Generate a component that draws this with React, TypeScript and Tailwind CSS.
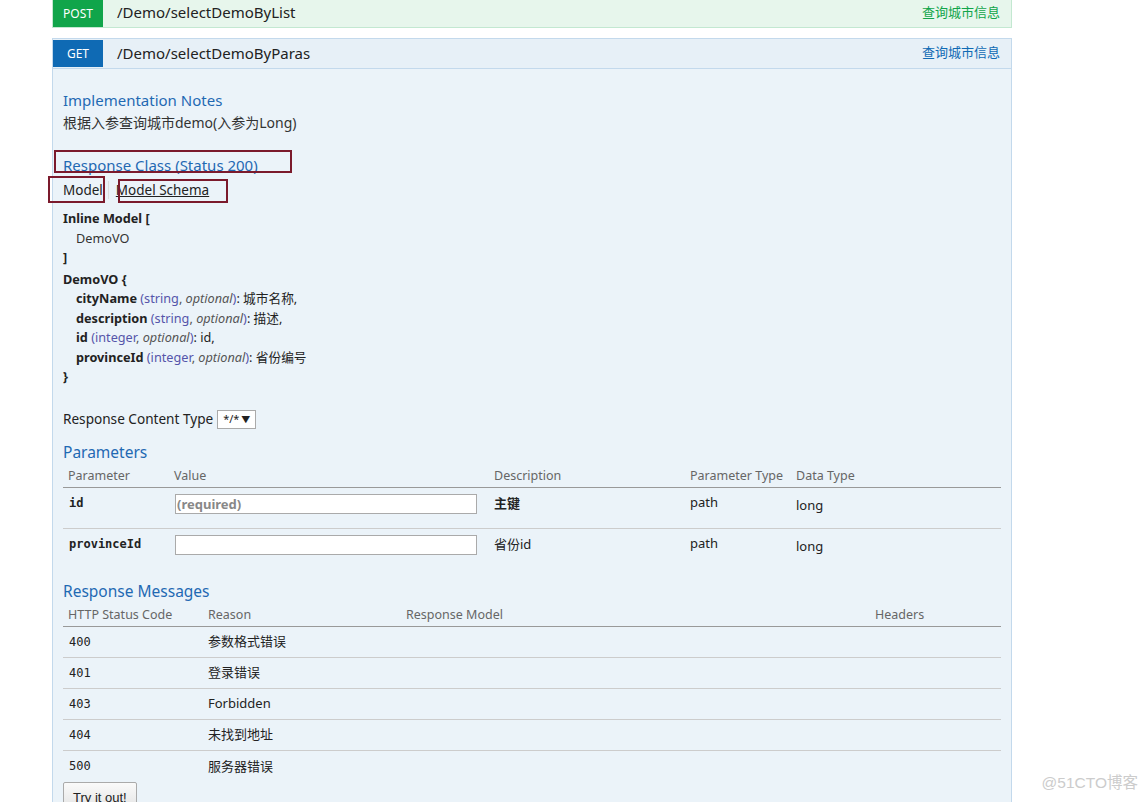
import React from 'react';

const sans = { fontFamily: '"Noto Sans", "Noto Sans CJK SC", sans-serif' };
const mono = { fontFamily: '"DejaVu Sans Mono", monospace', fontSize: 12 };

interface Param {
  name: string;
  placeholder?: string;
  desc: string;
  bold?: boolean;
}

const params: Param[] = [
  { name: 'id', placeholder: '(required)', desc: '主键', bold: true },
  { name: 'provinceId', desc: '省份id' },
];

const messages = [
  ['400', '参数格式错误'],
  ['401', '登录错误'],
  ['403', 'Forbidden'],
  ['404', '未找到地址'],
  ['500', '服务器错误'],
];

function Field({ name, type, last, desc }: { name: string; type: string; last?: boolean; desc: string }) {
  return (
    <div className="pl-[13px]">
      <span className="font-bold">{name}</span>{' '}
      <span className="text-[#55a]">(</span>
      <span className="text-[#55a]">{type}</span>
      <span className="text-[#555]">, <i>optional</i></span>
      <span className="text-[#55a]">)</span>: {desc}
      {last ? '' : ','}
    </div>
  );
}

export default function App() {
  return (
    <div className="relative w-[1148px] h-[802px] overflow-hidden bg-white text-[#222]" style={sans}>
      <div className="ml-[52px] w-[960px]">
        {/* POST row */}
        <div className="flex h-[28px] items-stretch border border-t-0 border-[#c3e8d1] bg-[#e7f6ec]">
          <div className="flex w-[50px] items-center justify-center bg-[#10a54a] text-[12px] text-white">POST</div>
          <div className="ml-[14px] flex items-center text-[15px] text-[#222] -mt-[2px]">/Demo/selectDemoByList</div>
          <div className="ml-auto mr-[11px] flex items-center text-[13px] text-[#10a54a] -mt-[2px]">查询城市信息</div>
        </div>

        {/* GET row */}
        <div className="mt-[10px] flex h-[31px] items-stretch border border-[#c3d9ec] bg-[#e7f0f7] py-px">
          <div className="flex w-[50px] items-center justify-center bg-[#0f6ab4] text-[12px] text-white">GET</div>
          <div className="ml-[14px] flex items-center text-[15px] text-[#222]">/Demo/selectDemoByParas</div>
          <div className="ml-auto mr-[11px] flex items-center text-[13px] text-[#0f6ab4] -mt-[2px]">查询城市信息</div>
        </div>

        {/* Body */}
        <div className="relative h-[800px] border-x border-[#c3d9ec] bg-[#ebf3f9] pl-[10px] pr-[10px] pt-[20px] text-[13px]">
          <div className="text-[15px] leading-[22px] text-[#1f69b3]">Implementation Notes</div>
          <div className="mt-[2px] text-[14px] leading-[19px] text-[#333]">根据入参查询城市demo(入参为Long)</div>

          <div className="mt-[22px] text-[15px] leading-[22px] text-[#1f69b3]">Response Class (Status 200)</div>
          <div className="mt-[3px] flex h-[22px] items-center text-[13.5px]">
            <span className="pr-[5px]">Model</span>
            <span className="h-[18px] w-px bg-[#ddd]" />
            <span className="ml-[7px] underline">Model Schema</span>
          </div>

          <div className="mt-[8px] text-[12.7px] leading-[19.5px] text-[#222]">
            <div className="font-bold">Inline Model [</div>
            <div className="pl-[13px] text-[#333]">DemoVO</div>
            <div className="font-bold">]</div>
            <div className="mt-[2px] font-bold">DemoVO {'{'}</div>
            <Field name="cityName" type="string" desc="城市名称" />
            <Field name="description" type="string" desc="描述" />
            <Field name="id" type="integer" desc="id" />
            <Field name="provinceId" type="integer" desc="省份编号" last />
            <div className="font-bold">{'}'}</div>
          </div>

          <div className="mt-[23px] flex h-[20px] items-center text-[13.6px]">
            <span>Response Content Type</span>
            <span className="ml-[4px] flex h-[19px] w-[39px] items-center justify-between border border-[#aaa] bg-white px-[5px] text-[11px]">
              <span>*/*</span>
              <span className="text-[9px]">▼</span>
            </span>
          </div>

          <div className="mt-[11px] text-[15.5px] leading-[22px] text-[#1f69b3]">Parameters</div>
          <table className="w-[938px] border-collapse text-[12.5px]">
            <thead>
              <tr className="h-[25px] border-b border-[#999] text-left text-[#666]">
                <th className="w-[106px] pl-[5px] pt-[3px] font-normal">Parameter</th>
                <th className="w-[320px] pl-[5px] pt-[3px] font-normal">Value</th>
                <th className="w-[196px] pl-[5px] pt-[3px] font-normal">Description</th>
                <th className="w-[106px] pl-[5px] pt-[3px] font-normal">Parameter Type</th>
                <th className="pl-[5px] pt-[3px] font-normal">Data Type</th>
              </tr>
            </thead>
            <tbody className="text-[13px]">
              {params.map((p, i) => (
                <tr key={p.name} className={`h-[41px] align-top ${i === 0 ? 'border-b border-[#ccc]' : ''}`}>
                  <td className="pl-[6px] pt-[6px] font-bold" style={mono}>
                    {p.name}
                  </td>
                  <td className="pl-[6px] pt-[6px]">
                    <input
                      className="h-[20px] w-[302px] border border-[#aaa] bg-white px-px text-[13px] font-bold placeholder:text-[#888] outline-none"
                      placeholder={p.placeholder ?? ''}
                      readOnly
                    />
                  </td>
                  <td className={`pl-[5px] pt-[6px] ${p.bold ? 'font-bold' : ''}`}>{p.desc}</td>
                  <td className="pl-[5px] pt-[5px]">path</td>
                  <td className="pl-[5px] pt-[8px]">long</td>
                </tr>
              ))}
            </tbody>
          </table>

          <div className="mt-[10px] text-[15.5px] leading-[22px] text-[#1f69b3]">Response Messages</div>
          <table className="w-[938px] border-collapse text-[12.5px]">
            <thead>
              <tr className="h-[25px] border-b border-[#999] text-left text-[#666]">
                <th className="w-[140px] pl-[5px] pt-[3px] font-normal">HTTP Status Code</th>
                <th className="w-[198px] pl-[5px] pt-[3px] font-normal">Reason</th>
                <th className="w-[469px] pl-[5px] pt-[3px] font-normal">Response Model</th>
                <th className="pl-[5px] pt-[3px] font-normal">Headers</th>
              </tr>
            </thead>
            <tbody className="text-[13px]">
              {messages.map(([code, reason], i) => (
                <tr key={code} className={`h-[31px] ${i < messages.length - 1 ? 'border-b border-[#ccc]' : ''}`}>
                  <td className="pl-[6px]" style={mono}>
                    {code}
                  </td>
                  <td className="pl-[5px]">{reason}</td>
                  <td />
                  <td />
                </tr>
              ))}
            </tbody>
          </table>

          <button className="block h-[28px] rounded-[2px] border border-[#aaa] bg-gradient-to-b from-[#fafafa] to-[#e4e4e4] px-[9px] pt-[4px] text-[13px] text-[#222]" style={{ fontFamily: '"Liberation Sans", Arial, sans-serif' }}>
            Try it out!
          </button>

          {/* annotation boxes */}
          <div className="absolute left-[1px] top-[81px] h-[23px] w-[238px] border-2 border-[#7b1a2c]" />
          <div className="absolute left-[-5px] top-[107px] h-[27px] w-[57px] border-2 border-[#7b1a2c]" />
          <div className="absolute left-[65px] top-[110px] h-[24px] w-[110px] border-2 border-[#7b1a2c]" />
        </div>
      </div>

      <div className="absolute bottom-[8px] right-[10px] text-[15.5px] text-[#ccc]" style={{ fontFamily: '"Liberation Sans", "Noto Sans CJK SC", sans-serif' }}>
        @51CTO博客
      </div>
    </div>
  );
}
